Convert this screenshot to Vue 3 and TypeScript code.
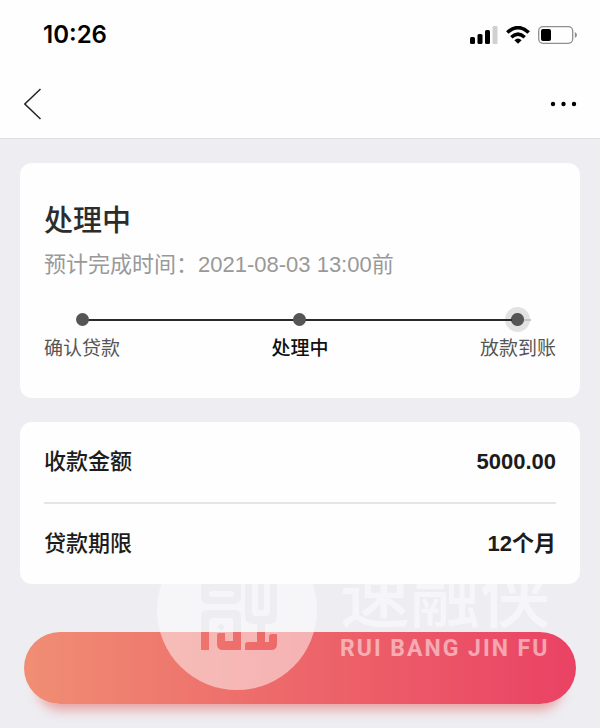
<script setup lang="ts">
interface Step {
  label: string
  active: boolean
}

interface Detail {
  label: string
  value: string
}

const steps: Step[] = [
  { label: '确认贷款', active: false },
  { label: '处理中', active: true },
  { label: '放款到账', active: false },
]

const details: Detail[] = [
  { label: '收款金额', value: '5000.00' },
  { label: '贷款期限', value: '12个月' },
]
</script>

<template>
  <div class="page">
    <header class="top">
      <div class="status">
        <span class="time">10:26</span>
        <div class="indicators">
          <svg class="signal" width="28" height="18" viewBox="0 0 28 18">
            <rect x="0" y="11" width="5" height="7" rx="1.5" />
            <rect x="7.5" y="8" width="5" height="10" rx="1.5" />
            <rect x="15" y="4" width="5" height="14" rx="1.5" />
            <rect x="22.5" y="0" width="5" height="18" rx="1" fill="#d0d0d0" />
          </svg>
          <svg class="wifi" width="24" height="18" viewBox="0 0 24 18">
            <path d="M1.3 6.5Q12-3.2 22.7 6.5" fill="none" stroke="#000" stroke-width="3.6" />
            <path d="M5.3 11.2Q12 5 18.7 11.2" fill="none" stroke="#000" stroke-width="3.4" />
            <path d="M8.4 14.2Q12 11 15.6 14.2L12 17.8Z" />
          </svg>
          <svg class="battery" width="40" height="18" viewBox="0 0 40 18">
            <rect x="0.7" y="0.7" width="34" height="16.6" rx="4.2" fill="none" stroke="#8f8f8f" stroke-width="1.3" />
            <rect x="3" y="3" width="10" height="12" rx="2" />
            <path d="M36.8 6Q39 7 39 9T36.8 12Z" fill="#8f8f8f" />
          </svg>
        </div>
      </div>
      <nav class="nav">
        <button class="icon-button" type="button" aria-label="返回">
          <svg width="20" height="32" viewBox="0 0 20 32">
            <path d="M18.5 1L2.8 16L18.5 31" fill="none" stroke="#222" stroke-width="1.5" />
          </svg>
        </button>
        <button class="icon-button" type="button" aria-label="更多">
          <svg width="28" height="6" viewBox="0 0 28 6">
            <circle cx="3" cy="3" r="2.2" />
            <circle cx="13.5" cy="3" r="2.2" />
            <circle cx="24" cy="3" r="2.2" />
          </svg>
        </button>
      </nav>
    </header>

    <main class="content">
      <section class="card progress">
        <h1>处理中</h1>
        <p class="estimate">预计完成时间：2021-08-03 13:00前</p>
        <ol class="steps">
          <li v-for="step in steps" :key="step.label" :class="{ active: step.active }">
            <span class="marker"></span>
            <span class="label">{{ step.label }}</span>
          </li>
        </ol>
      </section>

      <dl class="card details">
        <div v-for="item in details" :key="item.label" class="row">
          <dt>{{ item.label }}</dt>
          <dd>{{ item.value }}</dd>
        </div>
      </dl>

      <div class="action">
        <button class="submit" type="button" aria-label="提交"></button>
        <div class="watermark">
          <svg width="160" height="160" viewBox="0 0 160 160">
            <path
              fill="#fff"
              fill-rule="evenodd"
              d="M80 0A80 80 0 1 1 80 160A80 80 0 1 1 80 0Z
                M44 50H84V66Q84 74 76 74H52Q44 74 44 66Z
                M55 61H74Q77 61 77 64T74 67H55Q52 67 52 64T55 61Z
                M44 120V86Q44 80 50 80H78Q84 80 84 86V120H66Q60 120 60 114V105Q60 103 62 103H68V111H76V91Q76 88 73 88H55Q52 88 52 91V120Z
                M64 93L68 97L64 101L60 97Z
                M88 50H120V86Q120 94 112 94H108V112H112V107Q112 104 115 104H120V114Q120 120 114 120H88V115Q88 112 91 112H100V94H96Q88 94 88 86Z
                M95 50V82Q95 86 99 86H109Q113 86 113 82V50H107V80H101V50Z"
            />
          </svg>
          <div class="brand">
            <span class="brand-name">速融侠</span>
            <span class="brand-latin">RUI BANG JIN FU</span>
          </div>
        </div>
      </div>
    </main>
  </div>
</template>

<style>
body {
  background: #eeedf2;
}
</style>

<style scoped>
.page {
  min-height: 100vh;
  box-sizing: border-box;
  overflow: hidden;
  background: #eeedf2;
  color: #1c1c1c;
  font-family: "Liberation Sans", "Noto Sans CJK SC", sans-serif;
}

.top {
  background: #fefefe;
  border-bottom: 1px solid #dfdee3;
}

.status,
.nav {
  display: flex;
  align-items: center;
  justify-content: space-between;
}

.status {
  height: 70px;
  padding: 0 22px 0 43px;
}

.time {
  color: #000;
  font: 600 24px/30px Inter, sans-serif;
}

.indicators {
  display: flex;
  gap: 8px;
}

.nav {
  height: 68px;
  padding: 0 22px;
}

.icon-button {
  display: flex;
  padding: 0;
  border: 0;
  background: none;
}

.content {
  padding: 24px 20px;
}

.card {
  margin: 0 0 24px;
  padding: 0 24px;
  border-radius: 12px;
  background: #fefefe;
}

.progress {
  padding-top: 36px;
  padding-bottom: 32px;
}

h1 {
  margin: 0;
  color: #2c2c2c;
  font-size: 29px;
  font-weight: 500;
  line-height: 44px;
}

.estimate {
  margin: 4px 0 0;
  color: #999;
  font-size: 22px;
  line-height: 36px;
}

.steps {
  position: relative;
  display: flex;
  justify-content: space-between;
  margin: 24px 0 0;
  padding: 0;
  list-style: none;
}

.steps::before {
  position: absolute;
  top: 12px;
  right: 38px;
  left: 38px;
  height: 2px;
  background: #2a2a2a;
  content: "";
}

.steps li {
  position: relative;
  display: flex;
  flex-direction: column;
  align-items: center;
}

.marker {
  width: 13px;
  height: 13px;
  margin: 6px;
  border-radius: 50%;
  background: #555;
}

.steps li:last-child .marker {
  width: 25px;
  height: 25px;
  margin: 0;
  background: radial-gradient(circle, #555 6px, #e2e2e2 7px);
}

.steps::after {
  position: absolute;
  top: 12px;
  right: 25px;
  width: 7px;
  height: 2px;
  background: #c4c4c4;
  content: "";
}

.steps li:last-child::before {
  position: absolute;
  top: 12px;
  left: 20px;
  width: 12px;
  height: 2px;
  background: #2a2a2a;
  content: "";
}

.label {
  color: #555;
  font-size: 19px;
  line-height: 34px;
}

.active .label {
  color: #111;
  font-weight: 500;
}

.row {
  display: flex;
  align-items: center;
  justify-content: space-between;
  height: 80px;
  font-size: 22px;
  line-height: 32px;
}

.row + .row {
  border-top: 2px solid #e5e5e5;
}

dt {
  font-weight: 500;
}

dd {
  margin: 0;
  font-weight: 700;
}

.action {
  position: relative;
  padding: 24px 4px;
}

.submit {
  display: block;
  width: 100%;
  height: 72px;
  border: 0;
  border-radius: 36px;
  background: linear-gradient(90deg, #f08e74, #ed6a6a 45%, #ea4264);
  box-shadow: 0 20px 12px -14px #e9a3a3;
}

.watermark {
  position: absolute;
  top: -78px;
  left: 137px;
  display: flex;
  gap: 23px;
  color: #fff;
  opacity: 0.5;
  clip-path: inset(54px 0 0);
  pointer-events: none;
}

.brand {
  display: flex;
  flex-direction: column;
  white-space: nowrap;
}

.brand-name {
  margin-top: 30px;
  font-size: 70px;
  font-weight: 500;
  line-height: 76px;
}

.brand-latin {
  font: 700 23px/26px Roboto, sans-serif;
  letter-spacing: 2px;
}
</style>
